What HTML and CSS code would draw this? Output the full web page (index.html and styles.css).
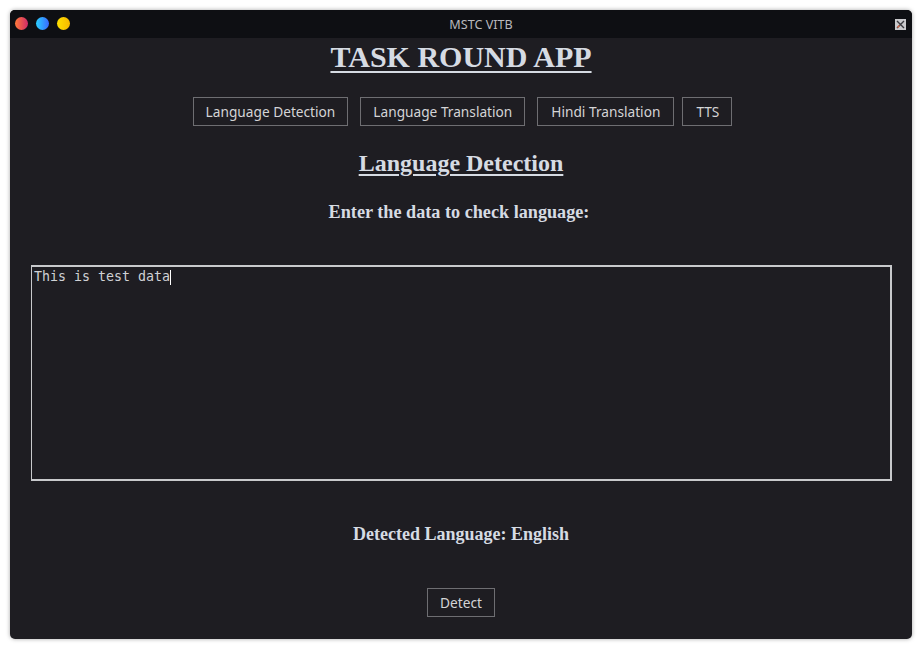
FILE: index.html
```html
<!DOCTYPE html>
<html>
<head>
<meta charset="utf-8">
<link rel="stylesheet" href="styles.css">
</head>
<body>
<div class="window">
  <div class="titlebar">
    <div class="lights">
      <span class="light red"></span>
      <span class="light blue"></span>
      <span class="light yellow"></span>
    </div>
    <div class="title">MSTC VITB</div>
    <div class="close">
      <svg width="11" height="11" viewBox="0 0 11 11">
        <rect x="0" y="0" width="11" height="11" fill="#c9c9cc"/>
        <path d="M2 2 L9 9 M9 2 L2 9" stroke="#3a3a40" stroke-width="1.4"/>
        <path d="M2.5 8.5 L4.5 6.5" stroke="#d96a4a" stroke-width="1.4"/>
      </svg>
    </div>
  </div>
  <div class="content">
    <h1 class="app-title">TASK ROUND APP</h1>
    <div class="nav">
      <button class="btn">Language Detection</button>
      <button class="btn nav-2">Language Translation</button>
      <button class="btn nav-3">Hindi Translation</button>
      <button class="btn nav-4">TTS</button>
    </div>
    <h2 class="section-title">Language Detection</h2>
    <p class="prompt">Enter the data to check language:</p>
    <div class="input-box"><span class="input-text">This is test data</span><span class="caret"></span></div>
    <p class="result">Detected Language: English</p>
    <button class="btn detect">Detect</button>
  </div>
</div>
</body>
</html>
```
FILE: styles.css
```css
html, body {
  margin: 0;
  padding: 0;
  background: #ffffff;
}
body {
  width: 922px;
  height: 649px;
  overflow: hidden;
}
.window {
  margin: 10px 0 0 10px;
  width: 902px;
  height: 629px;
  border-radius: 5px;
  background: #1e1d22;
  box-shadow: 0 0 4px rgba(0,0,0,0.35);
  overflow: hidden;
  display: flex;
  flex-direction: column;
}
.titlebar {
  height: 28px;
  background: #0e0f13;
  position: relative;
  display: flex;
  align-items: center;
  justify-content: center;
}
.lights {
  position: absolute;
  left: 5px;
  top: 7px;
  display: flex;
  gap: 8px;
}
.light {
  width: 13px;
  height: 13px;
  border-radius: 50%;
  display: block;
}
.red { background: linear-gradient(90deg, #ff7a3a, #d02a6a); }
.blue { background: linear-gradient(90deg, #2ad0ff, #3a6aff); }
.yellow { background: linear-gradient(90deg, #ffe000, #f6b800); }
.title {
  font-family: "Noto Sans", sans-serif;
  font-size: 12.6px;
  color: #b8b9bd;
  margin-left: 40px;
}
.close {
  position: absolute;
  right: 6px;
  top: 9px;
  width: 11px;
  height: 11px;
  display: flex;
}
.content {
  flex: 1;
  display: flex;
  flex-direction: column;
  align-items: center;
  color: #d6dbe3;
  font-family: "Liberation Serif", serif;
}
.app-title {
  margin: 1px 0 0 0;
  font-size: 30px;
  font-weight: bold;
  line-height: 36px;
  text-decoration: underline;
  text-decoration-thickness: 2px;
  text-underline-offset: 4px;
}
.nav {
  display: flex;
  margin: 22px 0 0 3px;
}
.btn {
  font-family: "Noto Sans", sans-serif;
  font-size: 13.7px;
  color: #d4d4d6;
  background: #1e1d22;
  border: 1px solid #6e6e72;
  height: 29px;
  padding: 0 12px;
  margin: 0;
  line-height: 27px;
}
.nav-2 { margin-left: 12px; }
.nav-3 { margin-left: 12px; padding: 0 13px; }
.nav-4 { margin-left: 8px; padding: 0 12px 0 13px; }
.section-title {
  margin: 22px 0 0 0;
  font-size: 24px;
  font-weight: bold;
  line-height: 30px;
  text-decoration: underline;
  text-decoration-thickness: 2px;
  text-underline-offset: 3px;
}
.prompt {
  margin: 22px 4px 0 0;
  font-size: 18.2px;
  font-weight: bold;
  line-height: 24px;
}
.input-box {
  margin-top: 41px;
  align-self: flex-start;
  margin-left: 21px;
  width: 856px;
  height: 211px;
  border: 1px solid #c8c9cc;
  border-top-width: 2px;
  border-right-width: 2px;
  border-bottom-width: 2px;
  padding: 1px 0 0 2px;
  display: flex;
  align-items: flex-start;
}
.input-text {
  font-family: "DejaVu Sans Mono", monospace;
  font-size: 13.3px;
  line-height: 17px;
  color: #d0d1d5;
}
.caret {
  width: 1px;
  height: 15px;
  margin-top: 2px;
  background: #ffffff;
}
.result {
  margin: 41px 0 0 0;
  font-size: 18px;
  font-weight: bold;
  line-height: 24px;
}
.detect {
  margin-top: 42px;
  padding: 0 12px;
}
```
